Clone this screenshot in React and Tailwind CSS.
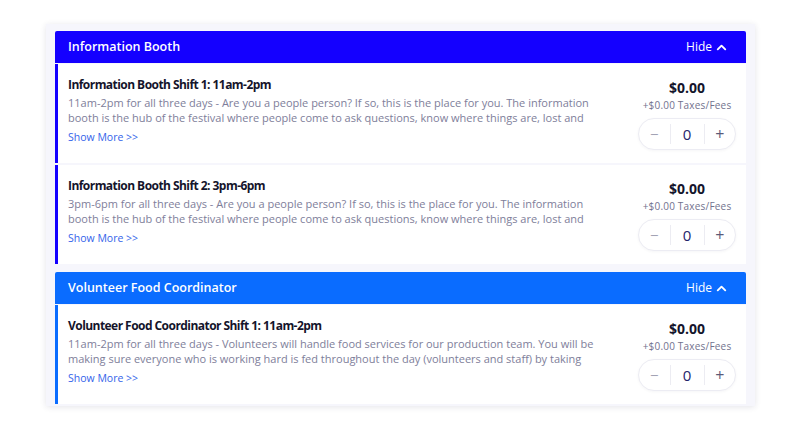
import React from 'react';
import { ChevronUp } from 'lucide-react';

// descriptions are clamped to two lines, break points as in the reference
const groups = [
  {
    name: 'Information Booth',
    color: 'bg-[#1400ff]',
    border: 'border-[#1400ff]',
    items: [
      {
        title: 'Information Booth Shift 1: 11am-2pm',
        lines: [
          '11am-2pm for all three days - Are you a people person? If so, this is the place for you. The information',
          'booth is the hub of the festival where people come to ask questions, know where things are, lost and',
        ],
      },
      {
        title: 'Information Booth Shift 2: 3pm-6pm',
        lines: [
          '3pm-6pm for all three days - Are you a people person? If so, this is the place for you. The information',
          'booth is the hub of the festival where people come to ask questions, know where things are, lost and',
        ],
      },
    ],
  },
  {
    name: 'Volunteer Food Coordinator',
    color: 'bg-[#0a6cff]',
    border: 'border-[#0a6cff]',
    items: [
      {
        title: 'Volunteer Food Coordinator Shift 1: 11am-2pm',
        lines: [
          '11am-2pm for all three days - Volunteers will handle food services for our production team. You will be',
          'making sure everyone who is working hard is fed throughout the day (volunteers and staff) by taking',
        ],
      },
    ],
  },
];

const Stepper = () => (
  <div className="flex items-center h-8 w-[98px] rounded-full border border-[#ececf3] bg-white shadow-[0_1px_3px_rgba(20,20,60,0.04)]">
    <button className="flex-1 text-center text-[15px] text-[#a3a3b5] leading-none">−</button>
    <span className="w-px h-5 bg-[#ececf2]" />
    <span className="w-[33px] text-center text-[15px] text-[#23236b]">0</span>
    <span className="w-px h-5 bg-[#ececf2]" />
    <button className="flex-1 text-center text-[16px] text-[#5a5a78] leading-none">+</button>
  </div>
);

const ShiftRow = ({ item, border }) => (
  <div className={`flex bg-white border-l-[3px] ${border} h-[99px] pl-[10px] pr-[10px] pt-[13px]`}>
    <div className="flex-1 min-w-0 pr-3">
      <h3 className="text-[12px] font-bold text-[#14142b] leading-[16px] tracking-[-0.55px]">{item.title}</h3>
      <p className="mt-[2px] text-[11px] leading-[15px] text-[#7e7e9a] whitespace-nowrap">
        {item.lines[0]}
        <br />
        {item.lines[1]}
      </p>
      <a className="block mt-[5px] text-[10.5px] font-medium text-[#3463ea] leading-[14px]">Show More &gt;&gt;</a>
    </div>
    <div className="flex flex-col items-center w-[98px] pt-[2px]">
      <div className="text-[14px] font-bold text-[#14142b] leading-[18px]">$0.00</div>
      <div className="mt-[1px] text-[10px] text-[#72728e] tracking-[0.2px] leading-[14px]">+$0.00 Taxes/Fees</div>
      <div className="mt-[6px]">
        <Stepper />
      </div>
    </div>
  </div>
);

export default function App() {
  return (
    <div className="min-h-screen bg-white pt-6 pl-[46px] pr-[45px]" style={{ fontFamily: '"Open Sans", "Liberation Sans", sans-serif' }}>
      <div className="bg-[#f6f6fc] shadow-[0_1px_6px_rgba(30,30,70,0.12)] px-[9px] pt-[7px] pb-[2px] flex flex-col gap-[8px]">
        {groups.map((g) => (
          <div key={g.name} className="flex flex-col gap-[2px]">
            <div className={`${g.color} h-8 rounded-t-[2px] flex items-center justify-between pl-[13px] pr-[17px] -mb-[1px]`}>
              <span className="text-white text-[12.5px] font-semibold">{g.name}</span>
              <span className="flex items-center gap-[2px] text-white text-[12px] font-medium">
                Hide <ChevronUp size={15} strokeWidth={3} />
              </span>
            </div>
            {g.items.map((it) => (
              <ShiftRow key={it.title} item={it} border={g.border} />
            ))}
          </div>
        ))}
      </div>
    </div>
  );
}
